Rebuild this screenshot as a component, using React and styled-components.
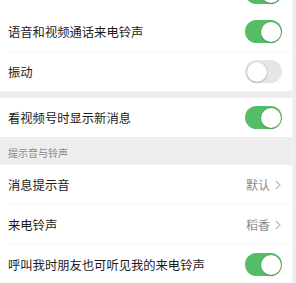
import React from 'react';
import styled, { createGlobalStyle } from 'styled-components';

const GlobalStyle = createGlobalStyle`
  html, body {
    margin: 0;
    padding: 0;
    background: #ededed;
  }
  body {
    font-family: "Noto Sans CJK SC", "Noto Sans", sans-serif;
    overflow: hidden;
  }
`;

const Page = styled.div`
  width: 296px;
  height: 283px;
  display: flex;
  overflow: hidden;
  background: #ededed;
`;

const Content = styled.div`
  flex: 1;
  display: flex;
  flex-direction: column;
  margin-top: -27px;
`;

const Track = styled.div`
  width: 3px;
  background: #ececec;
  border-left: 1px solid #f4f4f4;
`;

const Group = styled.div`
  background: #fff;
  display: flex;
  flex-direction: column;
`;

const Gap = styled.div`
  height: 7px;
  flex-shrink: 0;
`;

const SectionTitle = styled.div`
  height: 28px;
  flex-shrink: 0;
  display: flex;
  align-items: center;
  padding: 3px 8px 0;
  box-sizing: border-box;
  font-size: 10px;
  color: #8a8a8a;
`;

const Row = styled.div`
  height: 39px;
  flex-shrink: 0;
  display: flex;
  align-items: center;
  justify-content: space-between;
  padding: 0 10px 0 8px;
  position: relative;
  & + & {
    border-top: 1px solid ${p => (p.$faint ? '#f6f6f6' : '#efefef')};
    margin-left: 8px;
    padding-left: 0;
  }
`;

const Label = styled.span`
  font-size: 12.3px;
  color: #1b1b1b;
  white-space: nowrap;
`;

const Value = styled.span`
  display: flex;
  align-items: center;
  gap: 5px;
  font-size: 12px;
  color: #8c8c8c;
  margin-right: 1px;
`;

const Switch = styled.span`
  width: 37px;
  height: 23px;
  border-radius: 12px;
  box-sizing: border-box;
  background: ${p => (p.$on ? '#56bd67' : '#e6e6e6')};
  position: relative;
  flex-shrink: 0;
  &::after {
    content: '';
    position: absolute;
    top: 1.5px;
    left: ${p => (p.$on ? '15.5px' : '1.5px')};
    width: 20px;
    height: 20px;
    border-radius: 50%;
    background: #fff;
    box-shadow: 0 0 0 0.5px rgba(0, 0, 0, 0.12), 0 1px 2px rgba(0, 0, 0, 0.18);
  }
`;

const Chevron = () => (
  <svg width="6" height="10" viewBox="0 0 6 10">
    <path d="M1 1l4 4-4 4" fill="none" stroke="#b8b8b8" strokeWidth="1.1" />
  </svg>
);

const ToggleRow = ({ label, on, faint }) => (
  <Row $faint={faint}>
    <Label>{label}</Label>
    <Switch $on={on} />
  </Row>
);

const LinkRow = ({ label, value, faint }) => (
  <Row $faint={faint}>
    <Label>{label}</Label>
    <Value>
      {value}
      <Chevron />
    </Value>
  </Row>
);

export default function App() {
  return (
    <Page>
      <GlobalStyle />
      <Content>
        <Group>
          <Row>
            <Label />
            <Switch $on />
          </Row>
        </Group>
        <Group>
          <ToggleRow label="语音和视频通话来电铃声" on />
          <ToggleRow label="振动" on={false} />
        </Group>
        <Gap />
        <Group>
          <ToggleRow label="看视频号时显示新消息" on />
        </Group>
        <SectionTitle>提示音与铃声</SectionTitle>
        <Group>
          <LinkRow label="消息提示音" value="默认" />
          <LinkRow label="来电铃声" value="稻香" />
          <ToggleRow label="呼叫我时朋友也可听见我的来电铃声" on faint />
        </Group>
      </Content>
      <Track />
    </Page>
  );
}
